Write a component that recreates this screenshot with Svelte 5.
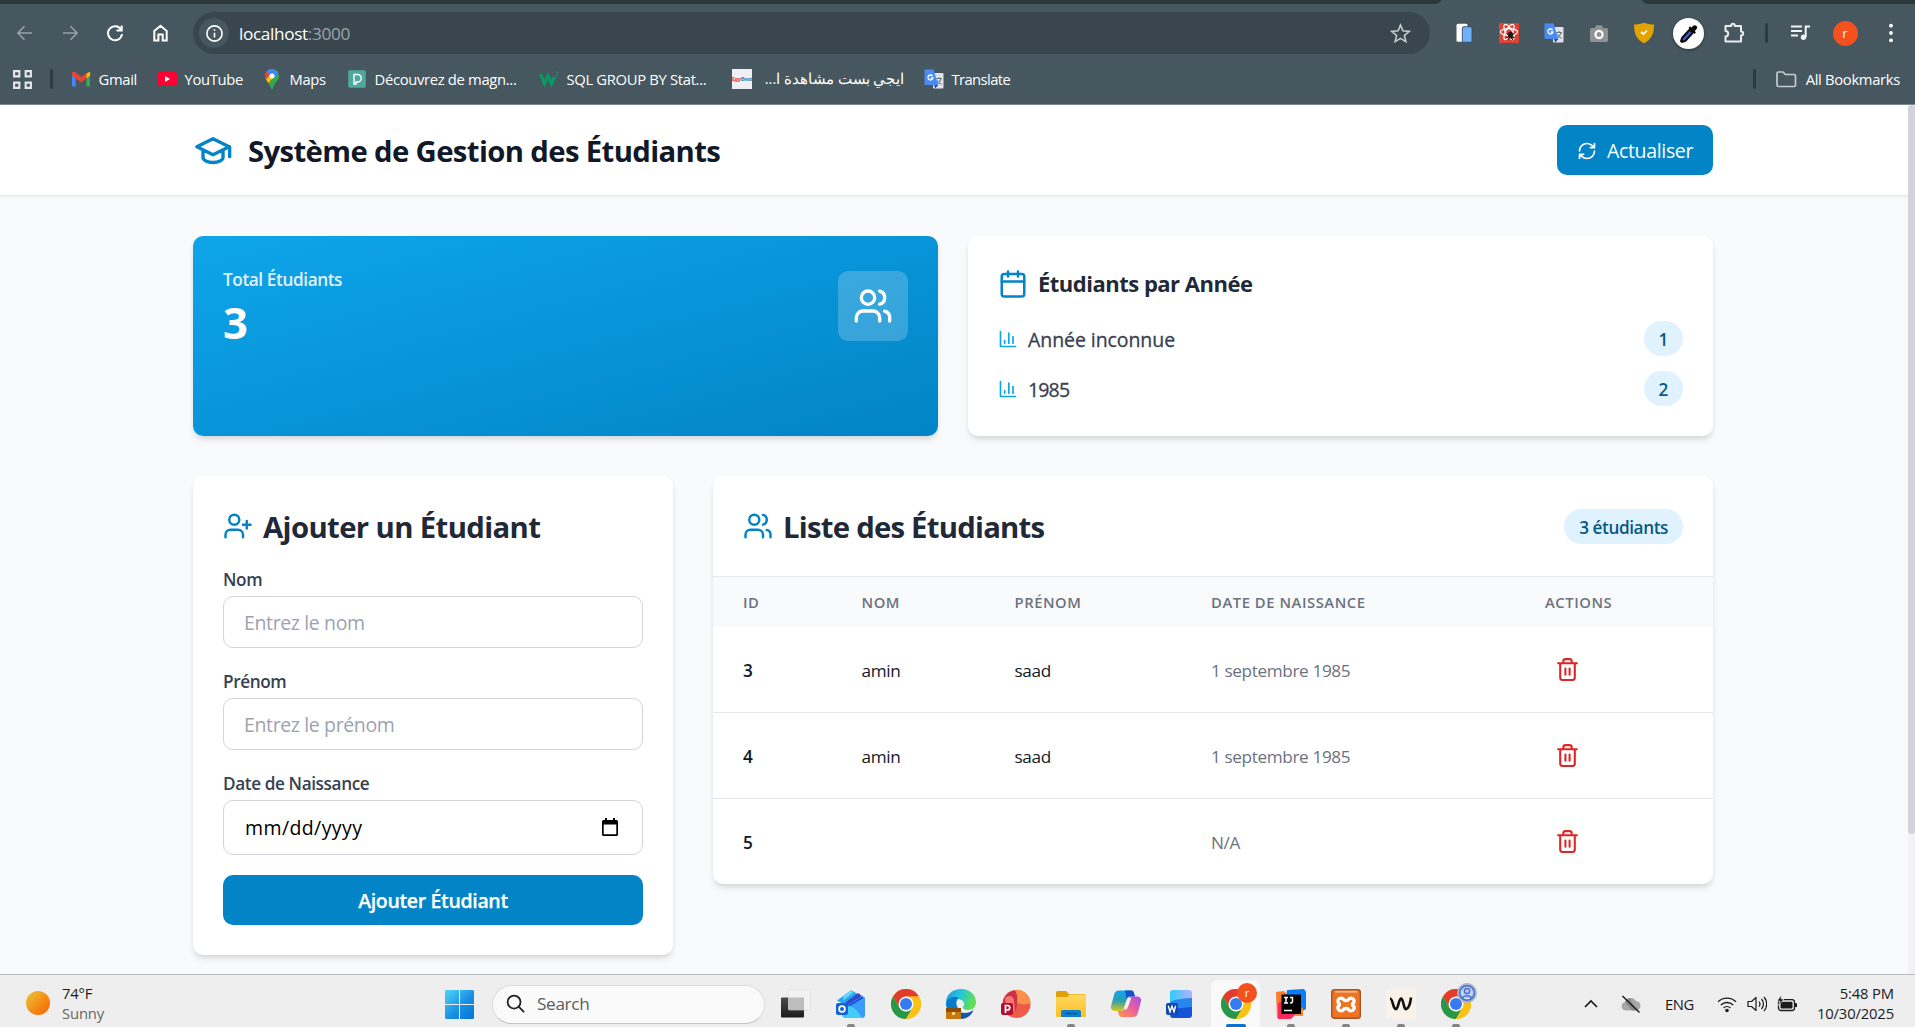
<script>
  const bookmarks = [
    { icon: 'gmail', label: 'Gmail' },
    { icon: 'youtube', label: 'YouTube' },
    { icon: 'maps', label: 'Maps' },
    { icon: 'deezer', label: 'Découvrez de magn...' },
    { icon: 'w3', label: 'SQL GROUP BY Stat...' },
    { icon: 'egy', label: 'ايجي بست مشاهدة ا...', rtl: true },
    { icon: 'translate', label: 'Translate' }
  ];
  const extensions = ['device', 'react', 'translate', 'camera', 'shield', 'picker', 'puzzle'];
  const years = [
    { year: 'Année inconnue', count: 1 },
    { year: '1985', count: 2 }
  ];
  const students = [
    { id: 3, nom: 'amin', prenom: 'saad', date: '1 septembre 1985' },
    { id: 4, nom: 'amin', prenom: 'saad', date: '1 septembre 1985' },
    { id: 5, nom: '', prenom: '', date: 'N/A' }
  ];
  const apps = [
    { icon: 'taskview' },
    { icon: 'outlook', running: true },
    { icon: 'chrome' },
    { icon: 'edge' },
    { icon: 'powerpoint' },
    { icon: 'explorer', running: true },
    { icon: 'copilot' },
    { icon: 'word' },
    { icon: 'chrome', badge: 'r', active: true },
    { icon: 'intellij', running: true },
    { icon: 'xampp', running: true },
    { icon: 'wave', running: true },
    { icon: 'chrome', badge: 'user', running: true }
  ];
</script>

{#snippet translateIcon(cls)}
  <svg class={cls} viewBox="0 0 20 20">
    <rect x="9" y="4" width="10.5" height="15.5" rx="1" fill="#dfe3e6" />
    <path d="M12 9.5h6M15 8v1.500M17 9.500c-.5 2.600-2.200 4.600-4.400 5.600M13.200 11.400c.9 1.800 2.300 3 4.300 3.900" fill="none" stroke="#6b7a80" stroke-width="1.100" />
    <path d="M1 .5h8.500l4.800 15.500H1.500A1 1 0 0 1 .5 15V1z" fill="#4a8af4" />
    <path d="M10 16h4.300l-3 3.500z" fill="#3044b8" />
    <path d="M8.600 7.200A2.500 2.500 0 1 0 8.900 9H6.800" fill="none" stroke="#fff" stroke-width="1.300" />
  </svg>
{/snippet}

{#snippet users()}
  <circle cx="9" cy="7" r="4" />
  <path d="M16 21v-2a4 4 0 0 0-4-4H6a4 4 0 0 0-4 4v2M22 21v-2a4 4 0 0 0-3-3.870M16 3.130a4 4 0 0 1 0 7.750" />
{/snippet}

<div class="screen">
  <div class="browser">
    <div class="tabstrip"><span class="strip-left"></span><span class="strip-right"></span></div>
    <div class="toolbar">
      <div class="nav">
        <svg class="nav-icon dim" viewBox="0 0 20 20"><path d="M17 10H3M9.500 3.200 2.900 10l6.600 6.800" /></svg>
        <svg class="nav-icon dim" viewBox="0 0 20 20"><path d="M3 10h14M10.500 3.200l6.600 6.800-6.600 6.800" /></svg>
        <svg class="nav-icon" viewBox="0 0 20 20"><path d="M16 6.500A7 7 0 1 0 17 11M16.700 2.500v5h-5.200" /></svg>
        <svg class="nav-icon" viewBox="0 0 20 20"><path d="M4.300 17.500V8L10.500 2.700 16.700 8v9.500h-4v-6H8.400v6z" /></svg>
      </div>
      <div class="omnibox">
        <span class="info"><svg viewBox="0 0 20 20"><circle cx="10" cy="10" r="8" /><path d="M10 9.200v5M10 5.400v1.800" /></svg></span>
        <span class="url">localhost<span class="port">:3000</span></span>
        <svg class="star" viewBox="0 0 20 20"><path d="M10 2l2.300 5.500 6 .5-4.600 3.900 1.400 5.800L10 14.600l-5.100 3.100 1.400-5.800L1.700 8l6-.5z" /></svg>
      </div>
      <div class="extensions">
        {#each extensions as ext}
          <span class="ext">
            {#if ext === 'device'}
              <svg class="i20" viewBox="0 0 20 20"><rect x="2.500" y=".7" width="11" height="18" rx="1.500" fill="#fff" /><rect x="8.300" y="3.700" width="9.700" height="15.600" rx="1.500" fill="#6fb0fb" stroke="#3b4868" stroke-width=".9" /></svg>
            {:else if ext === 'react'}
              <svg class="i20" viewBox="0 0 20 20"><rect width="20" height="20" rx="1" fill="#dc4235" /><g fill="none" stroke="#fff" stroke-width="1.200"><ellipse cx="10" cy="9" rx="8.600" ry="3.300" /><ellipse cx="10" cy="9" rx="8.600" ry="3.300" transform="rotate(60 10 9)" /><ellipse cx="10" cy="9" rx="8.600" ry="3.300" transform="rotate(120 10 9)" /></g><ellipse cx="11.500" cy="12" rx="2.500" ry="3.400" fill="#2b1513" /><path d="M7.500 10.500l8 4.500M7.500 14.500l8-4M9 17l2-4 3 4" stroke="#2b1513" stroke-width="1.100" fill="none" /></svg>
            {:else if ext === 'translate'}
              {@render translateIcon('i20')}
            {:else if ext === 'camera'}
              <svg class="i20" viewBox="0 0 20 20"><path d="M2.500 5h3.200l1.600-2.700h5.400L14.300 5h3.200A1.500 1.500 0 0 1 19 6.500v11a1.500 1.500 0 0 1-1.500 1.500h-15A1.500 1.500 0 0 1 1 17.500v-11A1.500 1.500 0 0 1 2.500 5z" fill="#8f9192" /><circle cx="10" cy="11.500" r="5.200" fill="#a8aaab" /><circle cx="10" cy="11.500" r="3.500" fill="#929494" stroke="#fff" stroke-width="2" /></svg>
            {:else if ext === 'shield'}
              <svg class="i22" viewBox="0 0 22 22"><path d="M11 .8c3 1.200 6.500 1.800 10 1.800 0 9-2.500 15-10 18.600C3.500 17.600 1 11.600 1 2.600 4.500 2.600 8 2 11 .8z" fill="#e2a400" /><path d="M8 9.800l2.400 2.300L14 8.700" fill="none" stroke="#fff" stroke-width="1.600" /></svg>
            {:else if ext === 'picker'}
              <span class="picker"><svg viewBox="0 0 24 24"><path d="M13.500 7.500l3.500 3.500-8.500 9.500-4 1-1-1 1.500-4z" fill="#3e57d6" stroke="#060608" stroke-width="2.300" /><path d="M12 5.500l7 7 1.500-1.800-1.500-1.600c3-2.300 3.800-4 2.200-5.600-1.700-1.700-3.600-1-5.700 1.800L14 3.800z" fill="#060608" /></svg></span>
            {:else}
              <svg class="i22" viewBox="0 0 22 22"><path d="M2.500 4h5.700c0-2.900 3.600-2.900 3.600 0H18v5.500c2.900.2 2.900 3.800 0 4v6H2.500v-5c3.600-.3 3.600-5.200 0-5.500z" fill="none" stroke="#e8eced" stroke-width="2" stroke-linejoin="round" /></svg>
            {/if}
          </span>
        {/each}
      </div>
      <span class="divider"></span>
      <div class="profile">
        <svg class="i20" viewBox="0 0 20 20"><path d="M1 3.500h11M1 8h11M1 12.500h7M15.700 14V3.500H20" fill="none" stroke="#f1f4f5" stroke-width="2" /><circle cx="13.500" cy="14.300" r="2.700" fill="#f1f4f5" /></svg>
        <span class="avatar">r</span>
        <svg class="dots" viewBox="0 0 6 20"><circle cx="3" cy="2.700" r="1.900" /><circle cx="3" cy="10" r="1.900" /><circle cx="3" cy="17.300" r="1.900" /></svg>
      </div>
    </div>

    <div class="bookmarks">
      <svg class="apps" viewBox="0 0 20 20"><path d="M2 2h5v5H2zM13 2h5v5h-5zM2 13h5v5H2zM13 13h5v5h-5z" /></svg>
      <span class="divider"></span>
      <div class="bookmark-grid">
        {#each bookmarks as b}
          <span class="bookmark">
            {#if b.icon === 'gmail'}
              <svg class="i20" viewBox="0 0 20 20"><path d="M1 5v12.500h3.700V8z" fill="#4285f4" /><path d="M19 5v12.500h-3.700V8z" fill="#34a853" /><path d="M15.300 4.500L19 2.800c.5 1 .3 3 0 3.800l-3.700 3z" fill="#fbbc04" /><path d="M1 6.600c-.3-1.300-.3-2.500.4-3.300 1-.9 2.300-.7 3.300 0L10 8l5.300-4v5.600L10 13.500z" fill="#ea4335" /></svg>
            {:else if b.icon === 'youtube'}
              <svg class="i20" viewBox="0 0 20 20"><rect y="3" width="20" height="14" rx="3" fill="#ff0033" /><path d="M8 7l5 3-5 3z" fill="#fff" /></svg>
            {:else if b.icon === 'maps'}
              <svg class="i20" viewBox="0 0 20 20"><path d="M10 0a7 7 0 0 1 7 7c0 4.500-4.500 6-6 12.500-.3.700-1.700.7-2 0C7.800 14 3 11.500 3 7a7 7 0 0 1 7-7z" fill="#34a853" /><path d="M3.300 9L13 .700A7 7 0 0 0 4.600 2.600L3.300 5z" fill="#4285f4" /><path d="M4.600 2.500A7 7 0 0 0 4 10.500L8 6z" fill="#ea4335" /><path d="M4 10.500c.8 1.500 1.700 2.400 2.400 3.500L13.500 6 8 6z" fill="#fbbc04" /><path d="M8 5L13 .700a7 7 0 0 1 3.400 3.600L12 9z" fill="#4285f4" /><circle cx="10" cy="7" r="2.500" fill="#fff" /></svg>
            {:else if b.icon === 'deezer'}
              <svg class="i20" viewBox="0 0 20 20"><rect x="1.200" y="1.200" width="17.600" height="17.600" rx="1.500" fill="#4da99b" /><path d="M7 15V5.500h3.500a3.500 3.500 0 0 1 0 7.500H9v2z" fill="none" stroke="#fff" stroke-width="1.400" /></svg>
            {:else if b.icon === 'w3'}
              <svg class="i20" viewBox="0 0 20 20"><path d="M1.500 5l4 9.500L9 7l3.500 7.500L15.500 8" fill="none" stroke="#069b62" stroke-width="3.200" /><path d="M16.500 3h2.700l-1.500 1.800c2 .2 1.500 2.700-1.200 2.100" fill="none" stroke="#069b62" stroke-width="1" /></svg>
            {:else if b.icon === 'egy'}
              <span class="egy"><b>Egy</b><i>Best</i></span>
            {:else}
              {@render translateIcon('i20')}
            {/if}
            <span class="label" class:rtl={b.rtl} dir={b.rtl ? 'rtl' : 'ltr'}>{b.label}</span>
          </span>
        {/each}
      </div>
      <div class="all-bookmarks">
        <span class="divider"></span>
        <svg class="folder" viewBox="0 0 22 18"><path d="M2 3.500A1.500 1.500 0 0 1 3.500 2H8l2.500 2.500H19A1.500 1.500 0 0 1 20.500 6v9a1.500 1.500 0 0 1-1.500 1.500H3.500A1.500 1.500 0 0 1 2 15z" /></svg>
        <span class="label">All Bookmarks</span>
      </div>
    </div>
  </div>

  <div class="viewport">
    <div class="page">
      <header>
        <div class="brand">
          <svg class="line s40" viewBox="0 0 24 24"><path d="M21.700 10L12 5.200 2.300 10 12 14.800zM22 10v6M6 12.300V16.500c0 1.500 2.600 3 6 3s6-1.500 6-3v-4.200" /></svg>
          <h1>Système de Gestion des Étudiants</h1>
        </div>
        <button class="refresh">
          <svg class="line s20" viewBox="0 0 24 24"><path d="M3 12a9 9 0 0 1 9-9 9.750 9.750 0 0 1 6.740 2.740L21 8M21 3v5h-5M21 12a9 9 0 0 1-9 9 9.750 9.750 0 0 1-6.740-2.740L3 16M8 16H3v5" /></svg>
          <span>Actualiser</span>
        </button>
      </header>

      <main>
        <section class="stats">
          <div class="card total">
            <div>
              <p class="total-label">Total Étudiants</p>
              <p class="total-value">3</p>
            </div>
            <span class="total-icon"><svg class="line s40" viewBox="0 0 24 24">{@render users()}</svg></span>
          </div>
          <div class="card years">
            <h3>
              <svg class="line s30" viewBox="0 0 24 24"><rect x="3" y="4" width="18" height="18" rx="2" /><path d="M8 2v4M16 2v4M3 10h18" /></svg>
              Étudiants par Année
            </h3>
            <ul>
              {#each years as y}
                <li>
                  <span class="year"><svg class="line s20" viewBox="0 0 24 24"><path d="M3 3v18h18M8 17v-3M13 17V5M18 17V9" /></svg><span class:digits={y.year === '1985'}>{y.year}</span></span>
                  <span class="pill">{y.count}</span>
                </li>
              {/each}
            </ul>
          </div>
        </section>

        <section class="content">
          <form class="card form">
            <h2>
              <svg class="line s30" viewBox="0 0 24 24"><circle cx="9" cy="7" r="4" /><path d="M16 21v-2a4 4 0 0 0-4-4H6a4 4 0 0 0-4 4v2M19 8v6M22 11h-6" /></svg>
              <span>Ajouter un Étudiant</span>
            </h2>
            <label for="nom">Nom</label>
            <input id="nom" type="text" placeholder="Entrez le nom" />
            <label for="prenom">Prénom</label>
            <input id="prenom" type="text" placeholder="Entrez le prénom" />
            <span class="field-label">Date de Naissance</span>
            <div class="date">
              <span>mm/dd/yyyy</span>
              <svg viewBox="0 0 16 18"><path d="M3 0h2v2h6V0h2v2h1.500A1.500 1.500 0 0 1 16 3.500v13a1.500 1.500 0 0 1-1.500 1.500h-13A1.500 1.500 0 0 1 0 16.500v-13A1.500 1.500 0 0 1 1.500 2H3zM1.700 6.500v9.800h12.600V6.500z" fill-rule="evenodd" /></svg>
            </div>
            <button type="button" class="submit">Ajouter Étudiant</button>
          </form>

          <div class="card list">
            <div class="list-head">
              <h2><svg class="line s30" viewBox="0 0 24 24">{@render users()}</svg><span>Liste des Étudiants</span></h2>
              <span class="pill">3 étudiants</span>
            </div>
            <div class="row head">
              <span>ID</span><span>NOM</span><span>PRÉNOM</span><span>DATE DE NAISSANCE</span><span>ACTIONS</span>
            </div>
            {#each students as s}
              <div class="row body">
                <span class="id">{s.id}</span>
                <span>{s.nom}</span>
                <span>{s.prenom}</span>
                <span class="when">{s.date}</span>
                <span class="trash"><svg class="line" viewBox="0 0 24 24"><path d="M3 6h18M19 6v14a2 2 0 0 1-2 2H7a2 2 0 0 1-2-2V6M8 6V4a2 2 0 0 1 2-2h4a2 2 0 0 1 2 2v2M10 11v6M14 11v6" /></svg></span>
              </div>
            {/each}
          </div>
        </section>
      </main>
    </div>
    <div class="scrollbar"><span></span></div>
  </div>

  <div class="taskbar">
    <div class="weather">
      <span class="sun"></span>
      <div><p>74°F</p><p class="muted">Sunny</p></div>
    </div>
    <svg class="start" viewBox="0 0 29 29">
      <defs><linearGradient id="win" x1="0" y1="0" x2="1" y2="1"><stop offset="0" stop-color="#4fd5fb" /><stop offset=".55" stop-color="#1a90e3" /><stop offset="1" stop-color="#0575d6" /></linearGradient></defs>
      <path d="M1 0h13v14H0V1zM15 0h13l1 1v13H15zM0 15h14v14H1l-1-1zM15 15h14v13l-1 1H15z" fill="url(#win)" />
    </svg>
    <div class="search">
      <svg viewBox="0 0 20 20"><circle cx="8.500" cy="8.500" r="6.800" /><path d="M13.300 13.300L18.500 18.500" /></svg>
      <span>Search</span>
    </div>
    <div class="apps-row">
      {#each apps as app}
        <span class="app" class:active={app.active} class:running={app.running}>
          {#if app.icon === 'taskview'}
            <svg viewBox="0 0 30 30"><defs><linearGradient id="tv" x1="0" y1="0" x2="0" y2="1"><stop offset="0" stop-color="#4a4a4a" /><stop offset="1" stop-color="#1c1c1c" /></linearGradient></defs><rect y="8.500" width="23" height="20" rx="1" fill="url(#tv)" /><rect x="7.500" y="1" width="22" height="20" rx="1" fill="#f2f2f2" stroke="#dcdcdc" stroke-width=".6" /><path d="M7.500 8.500H23V21H8.500a1 1 0 0 1-1-1z" fill="#bdbdbd" /></svg>
          {:else if app.icon === 'outlook'}
            <svg viewBox="0 0 30 30"><path d="M1 11.500L14 2a3 3 0 0 1 3 0l12 8.500-14 9z" fill="#28a4f4" /><path d="M8 6l7-4.300 3 1L7 12z" fill="#69d7f9" /><path d="M10 13L22 4l4 3-16 10z" fill="#3547cb" /><path d="M12 16.500L27 7l2 5-14 9z" fill="#1451cf" /><path d="M11 19l18-11v18a3 3 0 0 1-3 3H9z" fill="#3c9bf8" /><path d="M6 18l8-1c5 2 9 6 12 12l-16-.1a3 3 0 0 1-4-3z" fill="#40cdf9" /><rect y="14" width="12" height="12" rx="2" fill="#1462d3" /><circle cx="6" cy="20" r="2.900" fill="none" stroke="#fff" stroke-width="1.700" /></svg>
          {:else if app.icon === 'chrome'}
            <svg viewBox="0 0 30 30"><circle cx="15" cy="15" r="15" fill="#fbc116" /><path d="M2 7.500A15 15 0 0 1 28 7.500L15 8 8.500 18.800z" fill="#e33b2e" /><path d="M2 7.500L8.500 18.700 15 22.500 21.500 18.800 15 30A15 15 0 0 1 2 7.500z" fill="#279847" /><path d="M15 7.500h13A15 15 0 0 1 15 30l6.500-11.200z" fill="#fbc116" /><circle cx="15" cy="15" r="7.500" fill="#fff" /><circle cx="15" cy="15" r="6" fill="#367bf0" /></svg>
          {:else if app.icon === 'edge'}
            <svg viewBox="0 0 30 30"><defs><linearGradient id="eg" x1="0" y1="0" x2="1" y2=".3"><stop offset="0" stop-color="#1f95dd" /><stop offset=".5" stop-color="#25c5df" /><stop offset="1" stop-color="#63df52" /></linearGradient></defs><path d="M0 14C0 5 7 0 15 0c9 0 15 6 15 13 0 5-3.500 8-8 8-3.500 0-5.500-1.700-5-3 2.500-2.500 1-6.500-3-7.500C8 9 2 11 0 15z" fill="url(#eg)" /><path d="M0 15c1-6 8-9 13-6-3 2-3.500 6-1 10H1C.2 17.500 0 16 0 15z" fill="#087cc9" /><path d="M15 23.500c5 1 9 0 12.500-2.500-2 5.500-7 9-12.500 9z" fill="#125aa5" /><rect y="19" width="15" height="11" rx="1" fill="#c47712" /><path d="M0 19h15v4H0z" fill="#8f4b09" /><rect x="6" y="23" width="3" height="3" fill="#ffd35c" /></svg>
          {:else if app.icon === 'powerpoint'}
            <svg viewBox="0 0 30 30"><circle cx="15.500" cy="15" r="14" fill="#ef5a48" /><path d="M14 1.200C8 2 3.500 6 2 12v5l13 5 1-8C17 8 16 4 14 1.200z" fill="#cf3149" /><path d="M14 1.200C22-1 29 7 29.500 14c-3 2-12 2-13.500-1 1-5 0-9-2-11.800z" fill="#fb9148" /><path d="M4 9c3-3 8-3 9 2l1 11-9-4z" fill="#f6776e" /><rect y="14" width="12" height="12" rx="2" fill="#b60e31" /><path d="M4.500 24v-7.500h2a2.200 2.200 0 0 1 0 4.500h-2" fill="none" stroke="#fff" stroke-width="1.700" /></svg>
          {:else if app.icon === 'explorer'}
            <svg viewBox="0 0 30 30"><defs><linearGradient id="ex" x1="0" y1="0" x2="0" y2="1"><stop offset="0" stop-color="#ffd860" /><stop offset="1" stop-color="#fcc125" /></linearGradient></defs><path d="M0 3.500A1.500 1.500 0 0 1 1.500 2H10l3 3h15.500A1.500 1.500 0 0 1 30 6.500V12H0z" fill="#dfa109" /><path d="M0 8h11l3-2.500h16V27a1 1 0 0 1-1 1H1a1 1 0 0 1-1-1z" fill="url(#ex)" /><path d="M5 28v-5a2 2 0 0 1 2-2h16a2 2 0 0 1 2 2v5z" fill="#117dcd" /><path d="M9 24.500h12" stroke="#0a4f91" stroke-width="1.200" /></svg>
          {:else if app.icon === 'copilot'}
            <svg viewBox="0 0 30 30"><defs><linearGradient id="ca" x1="0" y1="0" x2="0" y2="1"><stop offset="0" stop-color="#0ea7ec" /><stop offset=".5" stop-color="#2d9fb0" /><stop offset="1" stop-color="#d8c61b" /></linearGradient><linearGradient id="cb" x1="1" y1="0" x2="0" y2="1"><stop offset="0" stop-color="#a44dea" /><stop offset=".5" stop-color="#ee6295" /><stop offset="1" stop-color="#fb9749" /></linearGradient></defs><path d="M8 1.500h12c2.500 0 3 2 4 6h-5c-2 0-2.700 1-3.300 3L13 19c-.7 2-1.500 3-4 3H4c-4 0-4.500-3-3.700-6L3 6c.8-3 2-4.500 5-4.500z" fill="url(#ca)" /><path d="M14 1.500h6c2.500 0 3 2 4 6h-5c-2 0-2.700 1-3.300 3z" fill="#1550ce" /><path d="M22 28H11c-2.500 0-3.500-2-4-6h3c2 0 3-1 3.500-3L16.500 10.500c.5-2 1.500-3 3.500-3h6c4 0 4.500 3 3.700 6L27 23.500c-.8 3-2 4.500-5 4.500z" fill="url(#cb)" /><path d="M16.500 9.500c1-2 4-1.500 3.300 1L16.500 19c-1 2.500-4 2-3.200-.5z" fill="#eef3f5" /></svg>
          {:else if app.icon === 'word'}
            <svg viewBox="0 0 30 30"><defs><linearGradient id="wd" x1="0" y1="0" x2="1" y2="0"><stop offset="0" stop-color="#2fcdfb" /><stop offset="1" stop-color="#b7b0fb" /></linearGradient></defs><rect x="4" y="1" width="22" height="14" rx="3" fill="url(#wd)" /><path d="M4 13c5-3 17-4 22-4v12H4z" fill="#2a86ef" /><path d="M4 22c6-4 16-3 22-4v8a3 3 0 0 1-3 3H7a3 3 0 0 1-3-3z" fill="#1253d8" /><rect y="14" width="12" height="12" rx="2" fill="#1146ac" /><path d="M2.300 16.800l1.700 6 2-5.500 2 5.500 1.700-6" fill="none" stroke="#fff" stroke-width="1.400" /></svg>
          {:else if app.icon === 'intellij'}
            <svg viewBox="0 0 30 30"><path d="M0 3l8-1 8 8-8 20-7-1z" fill="#fb7b2b" /><path d="M2 14l10-4 8 15-5 5H2z" fill="#fb2b5a" /><path d="M11 1l17-1 2 3v17l-11 6-9-13z" fill="#087cfa" /><path d="M17 27h10V18z" fill="#f98533" /><rect x="5.500" y="5.500" width="19.500" height="19.500" fill="#000" /><path d="M8 8.500h4M8 14h4M10 8.500V14M14 8.500h2.500v4a1.500 1.500 0 0 1-2.500 1M8 21.500h8" fill="none" stroke="#fff" stroke-width="1.500" /></svg>
          {:else if app.icon === 'xampp'}
            <svg viewBox="0 0 30 30"><rect x=".7" y=".7" width="28.600" height="28.600" rx="2.500" fill="#ee7424" stroke="#a75522" stroke-width="1.400" /><path d="M4 2.700h22" stroke="#f9ba8d" stroke-width="1.800" /><path d="M10 15.500a3.200 3.200 0 1 1 2.700-5c.3 1.500 4.300 1.500 4.600 0A3.200 3.200 0 1 1 20 15.500a3.200 3.200 0 1 1-2.700 5c-.3-1.500-4.300-1.500-4.600 0A3.200 3.200 0 1 1 10 15.500z" fill="none" stroke="#fff" stroke-width="3.400" /></svg>
          {:else}
            <svg viewBox="0 0 30 30"><rect width="30" height="30" rx="2.500" fill="#faf2e8" /><path d="M4 9.500c3 0 3 11.500 6.200 10.500 2.300-1 2.800-11 5-10.500 2.300.5 2.500 11.500 5 10.500C23 19 24.500 13 25 8.500" fill="none" stroke="#111" stroke-width="2.600" /></svg>
          {/if}
          {#if app.badge === 'r'}
            <span class="badge">r</span>
          {:else if app.badge === 'user'}
            <svg class="badge-user" viewBox="0 0 20 20"><circle cx="10" cy="10" r="10" fill="#a9b4c6" /><circle cx="10" cy="10" r="7.300" fill="#bfd2f8" stroke="#4a6fce" stroke-width="1.600" /><circle cx="10" cy="8" r="2.600" fill="none" stroke="#4a6fce" stroke-width="1.500" /><path d="M5 15c2-3 8-3 10 0" fill="none" stroke="#4a6fce" stroke-width="1.600" /></svg>
          {/if}
        </span>
      {/each}
    </div>
    <div class="tray">
      <svg class="chev" viewBox="0 0 14 9"><path d="M1 8l6-6 6 6" /></svg>
      <svg class="cloud" viewBox="0 0 20 18"><path d="M4.500 15.500A4.200 4.200 0 0 1 4 7.200 6 6 0 0 1 15 6a4.800 4.800 0 0 1 .5 9.500z" fill="#a7a7a7" /><path d="M4 7.200A6 6 0 0 1 9 3l6 12.500H11z" fill="#8b8b8b" /><path d="M1.500 1l17 16.500" stroke="#161616" stroke-width="1.400" /></svg>
      <span class="lang">ENG</span>
      <svg class="wifi" viewBox="0 0 20 18"><path d="M1 6.800a13 13 0 0 1 18 0M3.800 10a9 9 0 0 1 12.400 0M6.600 13a5 5 0 0 1 6.800 0" fill="none" stroke="#1b1b1b" stroke-width="1.300" /><circle cx="10" cy="15.500" r="1.800" fill="#1b1b1b" /></svg>
      <svg class="sound" viewBox="0 0 20 18"><path d="M1 6.500h3.500L9 2.500v13l-4.500-4H1zM12 6.500a4 4 0 0 1 0 5M14.500 4a7.500 7.500 0 0 1 0 10M17 2a10.500 10.500 0 0 1 0 14" fill="none" stroke="#1b1b1b" stroke-width="1.200" stroke-linejoin="round" /></svg>
      <svg class="battery" viewBox="0 0 20 18"><rect x="1.500" y="4.700" width="16" height="10.800" rx="2.500" fill="none" stroke="#1b1b1b" stroke-width="1.300" /><rect x="3.500" y="6.700" width="12" height="6.800" rx="1" fill="#1b1b1b" /><path d="M18 8.300h2v3.700h-2z" fill="#1b1b1b" /><path d="M4.500 0L0 6h2.800L1.500 10.500 7 4H4.200z" fill="#1b1b1b" stroke="#eee" stroke-width=".7" /></svg>
      <div class="clock"><p>5:48 PM</p><p>10/30/2025</p></div>
    </div>
  </div>
</div>

<style>
  :global(body) { margin: 0; overflow: hidden; }
  * { box-sizing: border-box; }
  p, h1, h2, h3, ul { margin: 0; padding: 0; font-weight: inherit; }
  svg { display: block; flex: none; }
  .screen { width: 1915px; height: 1027px; display: flex; flex-direction: column; overflow: hidden; font-family: "Open Sans", "Noto Sans", sans-serif; }

  /* browser frame */
  .browser { height: 105px; flex: none; background: #46575f; border-bottom: 1px solid #7b8991; display: flex; flex-direction: column; }
  .tabstrip { height: 4px; flex: none; display: flex; justify-content: space-between; }
  .strip-left { width: 1441px; background: #2c373c; border-bottom-right-radius: 8px 4px; }
  .strip-right { width: 273px; background: #2c373c; border-bottom-left-radius: 8px 4px; }
  .toolbar { height: 58px; flex: none; display: flex; align-items: center; }
  .nav { width: 193px; display: flex; gap: 25px; padding-left: 15px; }
  .nav-icon { width: 20px; height: 20px; fill: none; stroke: #fff; stroke-width: 2; }
  .nav-icon.dim { stroke: #97a1a6; stroke-width: 1.600; }
  .omnibox { width: 1237px; height: 42px; border-radius: 21px; background: #39464d; display: flex; align-items: center; padding: 0 19px 0 6px; }
  .info { width: 30px; height: 30px; border-radius: 50%; background: #46575f; display: grid; place-items: center; }
  .info svg { width: 19px; height: 19px; fill: none; stroke: #fff; stroke-width: 1.700; }
  .url { flex: 1; margin-left: 10px; font-size: 17.200px; letter-spacing: -.350px; color: #fff; }
  .port { color: #9aa4a9; }
  .star { width: 21px; height: 21px; fill: none; stroke: #c5cbce; stroke-width: 1.500; }
  .extensions { display: flex; margin-left: 11px; }
  .ext { width: 45px; height: 34px; display: grid; place-items: center; }
  .i20 { width: 20px; height: 20px; }
  .i22 { width: 22px; height: 22px; }
  .picker { width: 31px; height: 31px; border-radius: 50%; background: #fff; display: grid; place-items: center; box-shadow: 0 1px 3px #0006; }
  .picker svg { width: 21px; height: 21px; }
  .divider { width: 2.500px; height: 20px; flex: none; border-radius: 2px; background: #2f3b40; }
  .toolbar > .divider { margin-left: 9px; }
  .profile { display: flex; align-items: center; margin-left: 22px; }
  .avatar { width: 25px; height: 25px; margin-left: 23px; border-radius: 50%; background: #f4511e; color: #fff; font-size: 13px; line-height: 24px; text-align: center; }
  .dots { width: 6px; height: 20px; margin-left: 30px; fill: #fff; }
  .bookmarks { height: 34px; display: flex; align-items: center; padding-left: 12px; color: #fff; }
  .apps { width: 21px; height: 21px; fill: none; stroke: #e4e8ea; stroke-width: 2; }
  .bookmarks > .divider { margin-left: 17px; }
  .bookmark-grid { display: grid; grid-template-columns: 86px 105px 85px 192px 193px 192px 100px; margin-left: 18.500px; }
  .bookmark { display: flex; align-items: center; gap: 7.500px; }
  .label { padding-bottom: 1px; font-size: 14.800px; line-height: 20px; letter-spacing: -.330px; white-space: nowrap; }
  .bookmark:last-child .label { letter-spacing: -.600px; }
  .rtl { letter-spacing: 0; width: 138px; margin-left: 7px; font-size: 14.500px; text-align: left; }
  .egy { width: 20px; height: 20px; background: #eef0f3; display: flex; align-items: center; justify-content: center; font-size: 6px; letter-spacing: -.400px; }
  .egy b { color: #e04a3a; }
  .egy i { color: #2f86cc; font-style: normal; font-weight: 700; }
  .all-bookmarks { display: flex; align-items: center; margin-left: auto; padding-right: 15px; }
  .folder { width: 22px; height: 18px; margin: 0 9px 0 19px; fill: none; stroke: #c7cdd0; stroke-width: 1.700; }

  /* page */
  .viewport { height: 869px; flex: none; display: flex; overflow: hidden; background: #f9fafb; }
  .page { width: 1908px; }
  .scrollbar { width: 7px; background: #f1f2f5; }
  .scrollbar span { display: block; height: 729px; background: #d1d3dc; border-radius: 4px; }
  header { height: 91px; display: flex; align-items: center; justify-content: space-between; padding: 0 195px 0 193px; background: #fff; border-bottom: 1px solid #e6e7ea; box-shadow: 0 1px 3px #0000000d; }
  .brand { display: flex; align-items: center; gap: 15px; }
  .brand svg { color: #0284c7; }
  h1 { font-size: 29.300px; line-height: 40px; font-weight: 700; letter-spacing: -.630px; color: #111827; padding-top: 1px; }
  .line { fill: none; stroke: currentColor; stroke-width: 2; stroke-linecap: round; stroke-linejoin: round; }
  .s20 { width: 20px; height: 20px; }
  .s30 { width: 30px; height: 30px; }
  .s40 { width: 40px; height: 40px; }
  button { border: 0; font-family: inherit; background: #0284c7; color: #fff; border-radius: 10px; height: 50px; }
  .refresh { width: 156px; display: flex; align-items: center; gap: 10px; padding: 1px 20px 0; font-size: 19.500px; letter-spacing: -.340px; }
  main { padding: 40px 195px 0 193px; }
  .card { border-radius: 10px; background: #fff; box-shadow: 0 5px 7.500px -1px #0000001a, 0 2.500px 5px -2.500px #0000001a; }
  .stats { display: grid; grid-template-columns: 1fr 1fr; gap: 30px; }
  .total { height: 200px; padding: 30px; display: flex; align-items: flex-start; justify-content: space-between; color: #fff; background: linear-gradient(to bottom right, #0ea5e9, #0284c7); }
  .total-label { padding-top: 1px; font-size: 17.200px; line-height: 25px; font-weight: 600; letter-spacing: -.400px; color: #e0f2fe; }
  .total-value { margin-top: 6px; font-size: 43.500px; line-height: 50px; font-weight: 700; }
  .total-icon { width: 70px; height: 70px; margin-top: 5px; border-radius: 10px; background: #fff3; display: grid; place-items: center; }
  .years { padding: 30px; }
  h3 { display: flex; align-items: center; gap: 10px; font-size: 22px; line-height: 35px; font-weight: 700; letter-spacing: -.500px; color: #1f2937; }
  h3 svg, h2 svg { color: #0284c7; }
  ul { list-style: none; margin-top: 20px; display: grid; gap: 15px; }
  li { height: 35px; display: flex; align-items: center; justify-content: space-between; }
  .year { display: flex; align-items: center; gap: 10px; font-size: 19.500px; font-weight: 500; letter-spacing: -.070px; color: #374151; -webkit-text-stroke: .3px #374151; }
  .year > span { padding-top: 2px; }
  .year > .digits { letter-spacing: -.850px; }
  .year svg { color: #0ea5e9; }
  .pill { height: 35px; padding: 1px 15px 0; border-radius: 18px; background: #e0f2fe; color: #075985; font-size: 17.200px; line-height: 35px; font-weight: 600; letter-spacing: -.420px; }
  .content { margin-top: 40px; display: grid; grid-template-columns: 480px 1000px; gap: 40px; align-items: start; }
  h2 { display: flex; align-items: center; gap: 10px; font-size: 29.300px; line-height: 40px; font-weight: 700; letter-spacing: -.620px; color: #1f2937; white-space: nowrap; }
  h2 span { position: relative; top: 1px; }
  .list h2 { letter-spacing: -.760px; }
  .form { height: 479px; padding: 30px; display: flex; flex-direction: column; }
  label, .field-label { margin: 20px 0 5px; padding-top: 1px; height: 25px; font-size: 17.200px; line-height: 25px; font-weight: 600; letter-spacing: -.400px; color: #374151; }
  input { width: 420px; height: 52px; padding: 0 20px; border: 1px solid #d1d5db; border-radius: 10px; font-family: inherit; font-size: 19.500px; letter-spacing: -.370px; background: #fff; }
  input::placeholder { color: #9ca3af; }
  .date { height: 55px; padding: 0 24px 0 21px; border: 1px solid #d1d5db; border-radius: 10px; display: flex; align-items: center; justify-content: space-between; font-size: 19.500px; letter-spacing: .400px; color: #000; }
  .date svg { width: 16px; height: 18px; margin-top: -2px; }
  .submit { margin-top: 20px; padding-top: 2px; font-size: 19.500px; font-weight: 600; letter-spacing: -.340px; -webkit-text-stroke: .25px #fff; }
  .list { height: 408px; overflow: hidden; }
  .list-head { height: 100px; padding: 0 30px; display: flex; align-items: center; justify-content: space-between; }
  .row { display: grid; grid-template-columns: 118.500px 153px 196.500px 334px 198px; align-items: center; }
  .row > span { padding-left: 30px; white-space: nowrap; }
  .head { height: 51px; border-top: 1px solid #e5e7eb; background: #f9fafb; color: #6b7280; font-size: 14.800px; font-weight: 600; letter-spacing: .550px; }
  .body { height: 86px; padding-top: 1px; border-bottom: 1px solid #e5e7eb; font-size: 17.200px; letter-spacing: -.380px; color: #111827; }
  .body:last-child { height: 85px; border-bottom: 0; }
  .id { font-weight: 600; }
  .row .when { color: #6b7280; }
  .row .trash { padding-left: 40px; padding-bottom: 1px; color: #dc2626; }
  .trash svg { width: 25px; height: 25px; }

  /* taskbar */
  .taskbar { height: 53px; flex: none; display: flex; align-items: center; background: #eee; border-top: 1px solid #b9bbc0; color: #1b1b1b; font-size: 14.800px; line-height: 20px; letter-spacing: -.150px; }
  .weather { width: 445px; display: flex; align-items: center; gap: 12px; padding-left: 26px; }
  .sun { width: 24px; height: 24px; margin-top: 4px; border-radius: 50%; background: linear-gradient(135deg, #ecc83c, #f5820f 65%, #f2640a); }
  .muted { color: #666; }
  .start { width: 29px; height: 29px; margin-top: 7px; }
  .search { width: 273px; height: 39px; margin: 6px 0 0 18px; padding: 0 0 1px 13px; display: flex; align-items: center; gap: 12px; border: 1px solid #ddd; border-bottom-color: #c3c3c3; border-radius: 20px; background: #fafafa; color: #5c5c5c; font-size: 17.200px; letter-spacing: -.350px; }
  .search svg { width: 19px; height: 19px; fill: none; stroke: #222; stroke-width: 1.900; stroke-linecap: round; }
  .apps-row { display: flex; height: 52px; margin-left: 3px; }
  .app { position: relative; width: 55px; padding: 14px 12.500px 0; }
  .app > svg { width: 30px; height: 30px; }
  .app.active { width: 49px; margin: 5px 3px 0; padding: 9px 9.500px 0; border-radius: 6px 6px 0 0; background: #f9f9f9; }
  .app.running::after, .app.active::after { content: ""; position: absolute; left: 50%; bottom: 0; width: 8px; height: 3px; margin-left: -4px; border-radius: 2px 2px 0 0; background: #858585; }
  .app.active::after { width: 20px; margin-left: -10px; background: #0a74d1; }
  .badge { position: absolute; top: 3px; right: 3px; width: 20px; height: 20px; border-radius: 50%; background: #f4511e; color: #fff; font-size: 11px; line-height: 19px; text-align: center; }
  .app > .badge-user { position: absolute; top: 8px; right: 6px; width: 20px; height: 20px; }
  .tray { flex: 1; display: flex; align-items: center; justify-content: flex-end; padding-right: 21px; }
  .tray > svg { width: 20px; height: 18px; margin-top: 5px; }
  .tray > .chev { width: 14px; height: 9px; fill: none; stroke: #1b1b1b; stroke-width: 1.700; margin-right: 23px; }
  .lang { width: 29px; margin: 6px 23px 0 24px; letter-spacing: -.400px; }
  .wifi, .sound { margin-right: 10px; }
  .clock { width: 97px; text-align: right; }
  .clock p, .weather p { position: relative; top: 2px; }
</style>
